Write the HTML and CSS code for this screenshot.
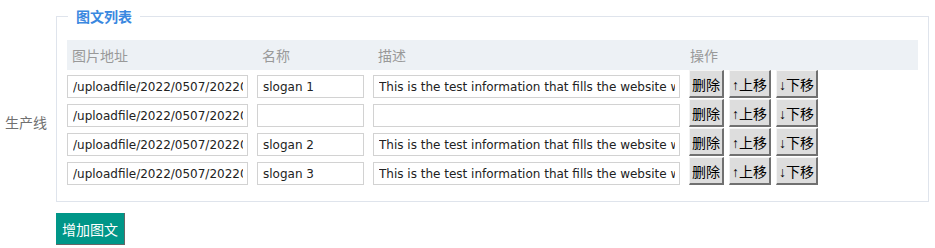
FILE: index.html
```html
<!DOCTYPE html>
<html lang="zh-CN">
  <head>
    <meta charset="UTF-8" />
    <meta name="viewport" content="width=device-width, initial-scale=1.0" />
    <title>图文列表</title>
    <link rel="stylesheet" href="styles.css">
  </head>
  <body>
    <div class="form-item">
      <label class="form-label">生产线</label>
      <fieldset class="pic-list">
        <legend>图文列表</legend>
        <div class="pic-head">
          <span>图片地址</span>
          <span>名称</span>
          <span>描述</span>
          <span>操作</span>
        </div>
        <div class="pic-row">
          <input class="ipt ipt-url" type="text" value="/uploadfile/2022/0507/20220507093412.jpg" />
          <input class="ipt ipt-name" type="text" value="slogan 1" />
          <input class="ipt ipt-desc" type="text" value="This is the test information that fills the website with content" />
          <div class="ops">
            <button class="op">删除</button>
            <button class="op">↑上移</button>
            <button class="op">↓下移</button>
          </div>
        </div>
        <div class="pic-row">
          <input class="ipt ipt-url" type="text" value="/uploadfile/2022/0507/20220507093520.jpg" />
          <input class="ipt ipt-name" type="text" value="" />
          <input class="ipt ipt-desc" type="text" value="" />
          <div class="ops">
            <button class="op">删除</button>
            <button class="op">↑上移</button>
            <button class="op">↓下移</button>
          </div>
        </div>
        <div class="pic-row">
          <input class="ipt ipt-url" type="text" value="/uploadfile/2022/0507/20220507093608.jpg" />
          <input class="ipt ipt-name" type="text" value="slogan 2" />
          <input class="ipt ipt-desc" type="text" value="This is the test information that fills the website with content" />
          <div class="ops">
            <button class="op">删除</button>
            <button class="op">↑上移</button>
            <button class="op">↓下移</button>
          </div>
        </div>
        <div class="pic-row">
          <input class="ipt ipt-url" type="text" value="/uploadfile/2022/0507/20220507093655.jpg" />
          <input class="ipt ipt-name" type="text" value="slogan 3" />
          <input class="ipt ipt-desc" type="text" value="This is the test information that fills the website with content" />
          <div class="ops">
            <button class="op">删除</button>
            <button class="op">↑上移</button>
            <button class="op">↓下移</button>
          </div>
        </div>
      </fieldset>
    </div>
    <button class="btn-add">增加图文</button>
  </body>
</html>
```

FILE: styles.css
```css
body {
  margin: 0;
  padding: 6px 6px 0 0;
  font-family: "Noto Sans CJK SC", "DejaVu Sans", sans-serif;
  font-size: 14px;
  color: #333;
  background: #fff;
}
.form-item {
  display: flex;
  align-items: center;
}
.form-label {
  flex: none;
  width: 47px;
  padding: 36px 9px 0 0;
  text-align: right;
  color: #707070;
  line-height: 20px;
  white-space: nowrap;
}
.pic-list {
  flex: 1;
  margin: 0;
  padding: 14px 10px 15px;
  border: 1px solid #dfe4ec;
  min-width: 0;
}
.pic-list > legend {
  margin-left: 1px;
  padding: 0 8px;
  font-weight: bold;
  color: #3a88e0;
  line-height: 20px;
}
.pic-head,
.pic-row {
  display: grid;
  grid-template-columns: 190px 116px 316px 1fr;
}
.pic-head {
  height: 30px;
  line-height: 30px;
  background-color: #edf1f5;
  color: #999;
}
.pic-head > span {
  padding-left: 5px;
}
.pic-head > span:last-child {
  padding-left: 1px;
}
.pic-row {
  height: 29px;
  align-items: end;
  padding-bottom: 1px;
  box-sizing: border-box;
}
.pic-row:first-of-type {
  margin-top: 1px;
}
.ipt {
  box-sizing: border-box;
  height: 23px;
  margin: 0;
  padding: 0 4px 0 5px;
  border: 1px solid #d2d2d2;
  font-family: "DejaVu Sans", sans-serif;
  font-size: 12px;
  color: #222;
  outline: none;
}
.ipt-url {
  width: 181px;
}
.ipt-name {
  width: 107px;
}
.ipt-desc {
  width: 307px;
}
.ops {
  display: flex;
  gap: 5px;
}
.op {
  box-sizing: border-box;
  height: 28px;
  margin: 0;
  padding: 0 2px;
  background-color: #dddddd;
  border-style: solid;
  border-width: 1px 2px 2px 1px;
  border-color: #f4f4f4 #707070 #707070 #f4f4f4;
  font-family: "Liberation Sans", "Noto Sans CJK SC", sans-serif;
  font-size: 14px;
  color: #000;
  cursor: pointer;
}
.btn-add {
  margin: 11px 0 0 56px;
  height: 32px;
  padding: 0 6px;
  background-color: #009688;
  border-style: solid;
  border-width: 0 1px 1px 0;
  border-color: #009688 #666 #666 #009688;
  font-family: "Noto Sans CJK SC", sans-serif;
  font-size: 14px;
  color: #fff;
  cursor: pointer;
}
```
